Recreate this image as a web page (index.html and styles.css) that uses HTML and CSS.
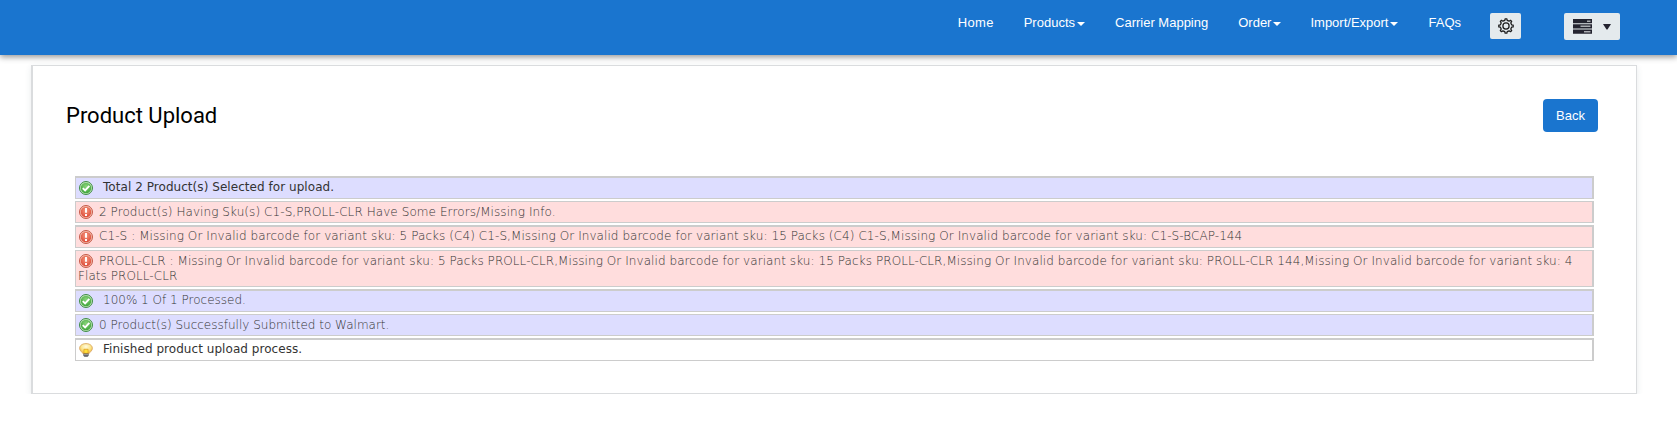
FILE: index.html
```html
<!DOCTYPE html>
<html lang="en">
<head>
<meta charset="utf-8">
<title>Product Upload</title>
<link rel="stylesheet" href="styles.css">
</head>
<body>
<svg class="defs" width="0" height="0" aria-hidden="true">
  <defs>
    <radialGradient id="green" cx=".5" cy=".35" r=".65"><stop offset="0" stop-color="#8bd47c"/><stop offset="1" stop-color="#3fa53a"/></radialGradient>
    <radialGradient id="red" cx=".5" cy=".35" r=".65"><stop offset="0" stop-color="#f59a80"/><stop offset="1" stop-color="#dc4a38"/></radialGradient>
    <radialGradient id="yellow" cx=".5" cy=".3" r=".7"><stop offset="0" stop-color="#fffbe0"/><stop offset=".55" stop-color="#fbe487"/><stop offset="1" stop-color="#eeb23a"/></radialGradient>
    <symbol id="ok" viewBox="0 0 16 16">
      <circle cx="8" cy="8" r="7.4" fill="#c5e8bd" stroke="#35863a" stroke-width="1.1"/>
      <circle cx="8" cy="8" r="6" fill="url(#green)"/>
      <path d="M4.300 8.100 7 10.700l4.800-5.100" fill="none" stroke="#fff" stroke-width="2.200"/>
    </symbol>
    <symbol id="error" viewBox="0 0 16 16">
      <circle cx="8" cy="8" r="7.4" fill="#f6c4b4" stroke="#c1513f" stroke-width="1.1"/>
      <circle cx="8" cy="8" r="6" fill="url(#red)"/>
      <path d="M8 3.400v5.400M8 10.300v2.200" stroke="#fff" stroke-width="2.200"/>
    </symbol>
    <symbol id="bulb" viewBox="0 0 16 16">
      <path d="M8 .7C3.700.7.7 3 .7 6.100c0 2.700 2.600 3.900 3.900 6.100h6.800c1.300-2.200 3.900-3.400 3.900-6.100C15.300 3 12.300.7 8 .7z" fill="url(#yellow)" stroke="#d9a662" stroke-width="1"/>
      <path d="M5.600 7.200h4.800v4.600H5.600z" fill="#ffe03a" stroke="#dd9a20" stroke-width=".8"/>
      <path d="M5 12h6v2.600l-1.200 1.200H6.200L5 14.600z" fill="#55565c"/>
      <path d="M5.600 13.400h4.800" stroke="#c8c8cc" stroke-width=".8"/>
    </symbol>
  </defs>
</svg>

<header class="topbar">
  <nav class="menu">
    <a class="menu-item menu-home">Home</a>
    <a class="menu-item">Products<i class="caret"></i></a>
    <a class="menu-item">Carrier Mapping</a>
    <a class="menu-item menu-order">Order<i class="caret"></i></a>
    <a class="menu-item">Import/Export<i class="caret"></i></a>
    <a class="menu-item">FAQs</a>
  </nav>
  <button class="tool tool-settings" aria-label="Settings">
    <svg width="16" height="16" viewBox="-8 -8 16 16" fill="none" stroke="#1c1c1c" stroke-width="1.25" stroke-linejoin="round">
      <path d="M-1.200-5.600-.9-7.200H.9L1.200-5.600 3.100-4.800 4.500-5.700 5.700-4.500 4.800-3.100 5.600-1.200 7.200-.9V.9L5.600 1.200 4.800 3.100 5.700 4.500 4.500 5.700 3.100 4.800 1.200 5.600.9 7.200H-.9L-1.200 5.600-3.100 4.800-4.500 5.700-5.700 4.500-4.800 3.100-5.600 1.200-7.200.9V-.9L-5.600-1.200-4.800-3.100-5.700-4.500-4.500-5.700-3.100-4.800z"/>
      <circle r="3.100"/>
    </svg>
  </button>
  <button class="tool tool-server" aria-label="Account">
    <svg width="19" height="15" viewBox="0 0 19 15">
      <path d="M0 0h19v4.200H0zM0 5.300h19v4.200H0zM0 10.600h19v4.200H0z" fill="#23232f"/>
      <path d="M14 1.400h3.500v1.500H14zM7.500 6.600h10v1.500h-10zM11 11.900h6.500v1.500H11z" fill="#a9abb0"/>
    </svg>
    <svg width="8" height="6" viewBox="0 0 8 6"><path d="M0 0h8L4.500 5.600h-1z" fill="#23232f"/></svg>
  </button>
</header>

<main class="card">
  <div class="card-head">
    <h1 class="title">Product Upload</h1>
    <button class="back">Back</button>
  </div>
  <ul class="log">
    <li class="entry ok thick dark"><svg class="icon"><use href="#ok"/></svg><span class="text wide">Total 2 Product(s) Selected for upload.</span></li>
    <li class="entry error"><svg class="icon"><use href="#error"/></svg><span class="text">2 Product(s) Having Sku(s) C1-S,PROLL-CLR Have Some Errors/Missing Info.</span></li>
    <li class="entry error thick"><svg class="icon"><use href="#error"/></svg><span class="text">C1-S : Missing Or Invalid barcode for variant sku: 5 Packs (C4) C1-S,Missing Or Invalid barcode for variant sku: 15 Packs (C4) C1-S,Missing Or Invalid barcode for variant sku: C1-S-BCAP-144</span></li>
    <li class="entry error"><svg class="icon"><use href="#error"/></svg><span class="text">PROLL-CLR : Missing Or Invalid barcode for variant sku: 5 Packs PROLL-CLR,Missing Or Invalid barcode for variant sku: 15 Packs PROLL-CLR,Missing Or Invalid barcode for variant sku: PROLL-CLR 144,Missing Or Invalid barcode for variant sku: 4 Flats PROLL-CLR</span></li>
    <li class="entry ok thick"><svg class="icon"><use href="#ok"/></svg><span class="text wide">100% 1 Of 1 Processed.</span></li>
    <li class="entry ok"><svg class="icon"><use href="#ok"/></svg><span class="text">0 Product(s) Successfully Submitted to Walmart.</span></li>
    <li class="entry thick dark"><svg class="icon"><use href="#bulb"/></svg><span class="text wide">Finished product upload process.</span></li>
  </ul>
</main>
</body>
</html>
```

FILE: styles.css
```css
* { box-sizing: border-box; }

body {
  margin: 0;
  background: #fff;
  font-family: "Liberation Sans", Arial, sans-serif;
}

.defs { display: block; height: 0; }

.topbar {
  display: flex;
  align-items: flex-start;
  justify-content: flex-end;
  height: 55px;
  padding: 13px 57px 0 0;
  background: #1a75cf;
  box-shadow: 0 2px 6px rgba(0, 0, 0, .42);
}

.menu { display: flex; margin-right: 14px; }

.menu-item {
  display: flex;
  align-items: center;
  padding: 0 15px;
  color: #fff;
  font-size: 13px;
  line-height: 20px;
  white-space: nowrap;
}

.menu-home { letter-spacing: .3px; }
.menu-order { padding-right: 14px; }

.caret {
  margin: 1px 0 0 2px;
  border: 4px solid transparent;
  border-top-color: #fff;
  border-bottom: 0;
}

.tool {
  display: flex;
  align-items: center;
  justify-content: center;
  border: 0;
  border-radius: 2px;
  background: #e4eaed;
  padding: 0;
}

.tool-settings { width: 31px; height: 26px; margin-right: 43px; }
.tool-server { width: 56px; height: 27px; gap: 11px; }

.card {
  height: 329px;
  margin: 10px 40px 0 31px;
  padding: 33px 38px 0 33px;
  border: 1px solid #dadcde;
  border-left-width: 2px;
  box-shadow: 0 2px 6px rgba(60, 80, 100, .12);
}

.card-head { display: flex; justify-content: space-between; height: 77px; }

.title {
  margin: 0;
  color: #000;
  font: 400 22px/34px Roboto, sans-serif;
}

.back {
  width: 55px;
  height: 33px;
  padding: 0;
  border: 0;
  border-radius: 4px;
  background: #1a75cf;
  color: #fff;
  font: 13px/33px "Liberation Sans", Arial, sans-serif;
}

.log {
  display: flex;
  flex-direction: column;
  gap: 2px;
  margin: 0 4px 0 9px;
  padding: 0;
  list-style: none;
}

.entry {
  padding: 3px 2px 2px;
  border: 1px solid #ccc;
  border-right-width: 2px;
  color: #333;
  font: 200 12px/15px "DejaVu Sans", sans-serif;
}

.thick { padding: 2px 2px 3px; border-top-width: 2px; }
.ok { background: #ddf; }
.error { background: #fdd; letter-spacing: .073px; }
.dark { font-weight: 400; letter-spacing: .05px; }

.icon {
  width: 14px;
  height: 14px;
  margin: 0 6px 0 1px;
  vertical-align: -3px;
}

.thick .icon { position: relative; top: 1px; }

.wide { margin-left: 4px; }
```
